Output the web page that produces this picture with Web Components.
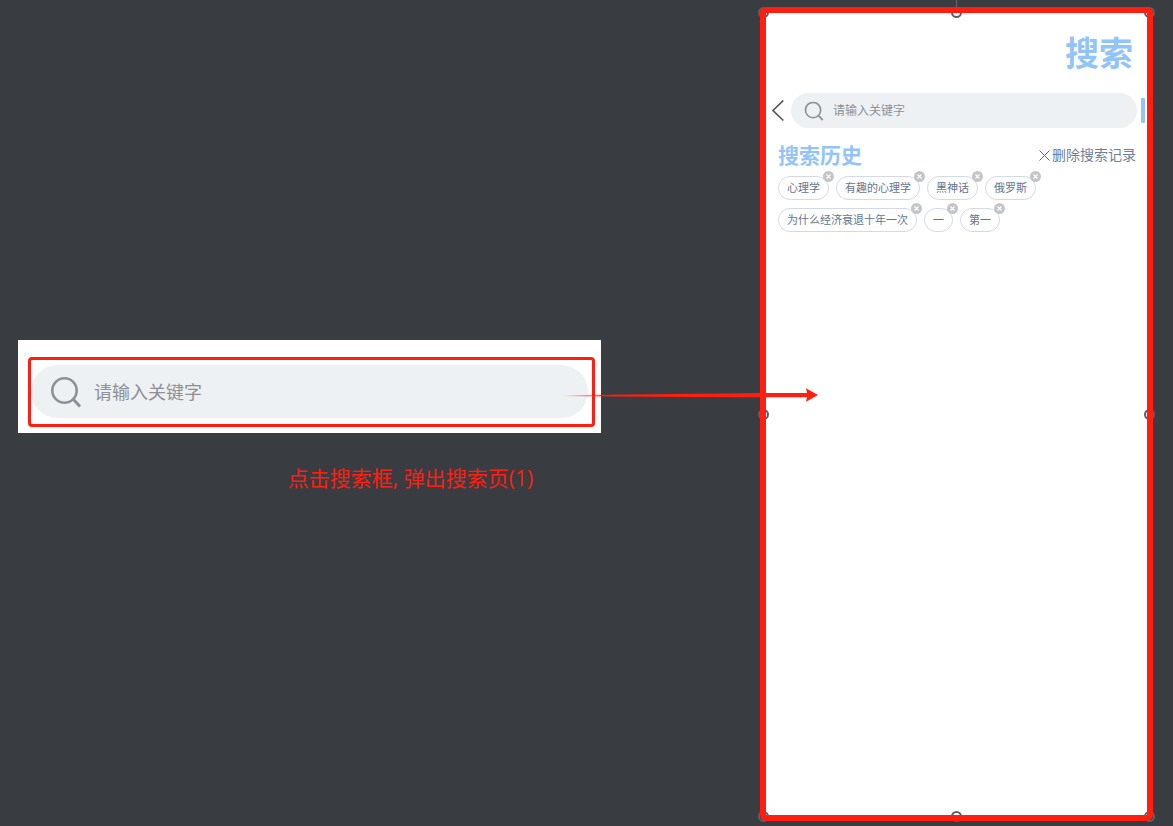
<!DOCTYPE html>
<html lang="zh-CN">
<head>
<meta charset="utf-8">
<meta name="viewport" content="width=device-width, initial-scale=1">
<title>搜索流程</title>
<style>
  body { margin: 0; background: #393c40; font-family: "Open Sans", "Noto Sans CJK SC", sans-serif; }
</style>
</head>
<body>
<design-board>
  <flow-step slot="trigger">
    <search-field large></search-field>
    <span slot="caption">点击搜索框, 弹出搜索页(1)</span>
  </flow-step>
  <flow-arrow slot="arrow"></flow-arrow>
  <selected-frame slot="screen">
    <search-screen>
      <span slot="title">搜索</span>
      <history-tag>心理学</history-tag>
      <history-tag>有趣的心理学</history-tag>
      <history-tag>黑神话</history-tag>
      <history-tag>俄罗斯</history-tag>
      <history-tag>为什么经济衰退十年一次</history-tag>
      <history-tag>一</history-tag>
      <history-tag>第一</history-tag>
    </search-screen>
  </selected-frame>
</design-board>
<script>
  const define = (name, html) => {
    const template = document.createElement('template');
    template.innerHTML = html;
    customElements.define(name, class extends HTMLElement {
      constructor() {
        super();
        this.attachShadow({ mode: 'open' }).append(template.content.cloneNode(true));
      }
    });
  };

  define('design-board', `
    <style>
      :host { display: grid; grid-template-columns: 583fr 159fr 393fr; box-sizing: border-box;
              min-height: 100vh; padding: 7px 20px 5px 18px; }
    </style>
    <slot name="trigger"></slot><slot name="arrow"></slot><slot name="screen"></slot>`);

  define('flow-step', `
    <style>
      :host { display: block; padding-top: 333px; }
      .card { background: #fff; padding: 17px 6px 6px 10px; }
      .mark { border: 3px solid #ff1e10; border-radius: 4px; padding: 5px 4px 6px 0; }
      p { margin: 29px 0 0; padding-left: 202px; text-align: center; color: #ff1e10;
          font-size: 21px; line-height: 32px; font-weight: 400; }
    </style>
    <div class="card"><div class="mark"><slot></slot></div></div>
    <p><slot name="caption"></slot></p>`);

  define('search-field', `
    <style>
      :host { display: block; flex: 1; min-width: 0; --height: 35px; --pad: 13px; --icon: 20px; --gap: 9px; --text: 12px; }
      :host([large]) { --height: 53px; --pad: 19px; --icon: 32px; --gap: 12px; --text: 18px; }
      label { display: flex; align-items: center; gap: var(--gap); box-sizing: border-box;
              height: var(--height); padding: 0 var(--pad); border-radius: 27px; background: #edf1f4; }
      svg { width: var(--icon); height: var(--icon); flex: none; }
      input { flex: 1; min-width: 0; padding: 0; border: 0; outline: 0; background: none;
              font: inherit; font-size: var(--text); color: #55585d; }
      input::placeholder { color: #8d9095; opacity: 1; }
    </style>
    <label>
      <svg viewBox="0 0 32 32" fill="none" stroke="#8d9095" stroke-width="2.6" aria-hidden="true">
        <circle cx="14.5" cy="14.5" r="12.2"/><path d="M23.3 23.3 30 30.5" stroke-width="3"/>
      </svg>
      <input type="text" placeholder="请输入关键字" aria-label="请输入关键字">
    </label>`);

  define('flow-arrow', `
    <style>
      :host { display: block; position: relative; z-index: 3; pointer-events: none; }
      svg { position: absolute; top: 381px; left: -39px; width: calc(100% + 97px); height: 14px; }
    </style>
    <svg viewBox="0 0 256 14" preserveAspectRatio="none" aria-hidden="true">
      <defs><linearGradient id="fade"><stop offset="0" stop-color="#ff1e10" stop-opacity="0"/><stop offset=".2" stop-color="#ff1e10"/></linearGradient></defs>
      <path d="M0 7.3 180 5.2 245 4.9 244 0.3 256 7 244 13.7 245 9.2 180 9.2 0 8.3Z" fill="url(#fade)"/>
    </svg>`);

  define('selected-frame', `
    <style>
      :host { display: grid; position: relative; }
      .page { margin: 3px; padding: 3px; background: #fff; }
      .outline { position: absolute; inset: 0; border: 6px solid #ff1e10; border-radius: 6px; z-index: 2; pointer-events: none; }
      .handles { position: absolute; inset: 0 -2px -1px; display: grid; grid-template-columns: repeat(3, auto);
                 justify-content: space-between; align-content: space-between; pointer-events: none; }
      i { box-sizing: border-box; width: 11px; height: 11px; border: 2px solid #5d6063; border-radius: 50%; }
      .none { visibility: hidden; }
      .stem { position: absolute; right: 50%; bottom: 100%; width: 1px; height: 7px; background: #66696d; }
    </style>
    <div class="page"><slot></slot></div>
    <div class="handles"><i></i><i></i><i></i><i></i><i class="none"></i><i></i><i></i><i></i><i></i></div>
    <div class="stem"></div>
    <div class="outline"></div>`);

  define('search-screen', `
    <style>
      :host { display: block; color: #6f7f9b; }
      h1, h2 { margin: 0; font-weight: 700; color: #93c4f8; }
      h1 { padding: 16px 14px 16px; text-align: right; font-size: 34px; line-height: 48px; }
      .search { display: flex; align-items: center; padding: 0 2px 0 6px; }
      button { padding: 0; border: 0; background: none; font: inherit; color: inherit; cursor: pointer; }
      .back { width: 12px; height: 22px; margin-right: 7px; }
      svg { display: block; }
      .cursor { width: 4px; height: 25px; margin-left: 4px; border-radius: 1px; background: #93c4f8; }
      header { display: flex; align-items: center; justify-content: space-between; padding: 14px 11px 0 12px; }
      h2 { font-size: 21px; line-height: 24px; }
      .clear { display: flex; align-items: center; gap: 2px; font-size: 14px; line-height: 26px; }
      .tags { display: flex; flex-wrap: wrap; gap: 8px 7px; padding: 8px 90px 0 12px; }
    </style>
    <h1><slot name="title"></slot></h1>
    <div class="search">
      <button class="back" aria-label="返回">
        <svg width="12" height="22" viewBox="0 0 12 22" fill="none" stroke="#55585d" stroke-width="1.7"><path d="M11.3.5 1 10.5 11.3 20.5"/></svg>
      </button>
      <search-field></search-field>
      <div class="cursor"></div>
    </div>
    <header>
      <h2>搜索历史</h2>
      <button class="clear">
        <svg width="11" height="11" viewBox="0 0 11 11" stroke="#66696f"><path d="M.5.5l10 10M10.5.5l-10 10"/></svg>
        <span>删除搜索记录</span>
      </button>
    </header>
    <div class="tags"><slot></slot></div>`);

  define('history-tag', `
    <style>
      :host { display: block; position: relative; box-sizing: border-box; height: 24px; padding: 0 8px;
              border: 1px solid #d3d9e8; border-radius: 12px; font-size: 11px; line-height: 22px;
              color: #66758f; white-space: nowrap; }
      button { position: absolute; top: -6px; right: -6px; width: 11px; height: 11px; padding: 0;
               border: 0; border-radius: 50%; background: #c4c5c8; cursor: pointer; }
      svg { display: block; }
    </style>
    <slot></slot>
    <button aria-label="删除"><svg width="11" height="11" viewBox="0 0 11 11" stroke="#fff" stroke-width="1.1"><path d="M3.5 3.5l4 4M7.5 3.5l-4 4"/></svg></button>`);
</script>
</body>
</html>
